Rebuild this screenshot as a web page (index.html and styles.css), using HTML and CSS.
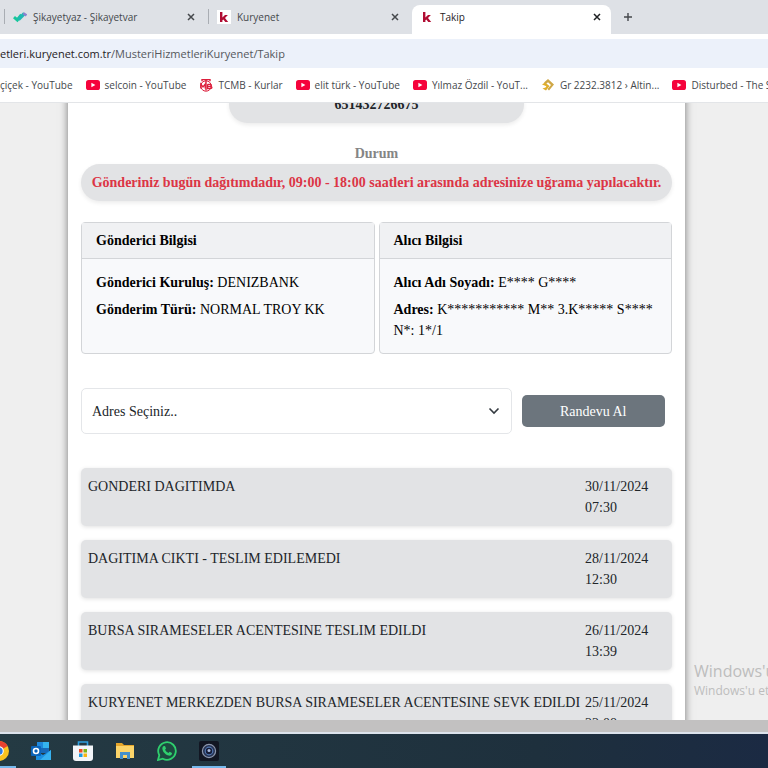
FILE: index.html
```html
<!DOCTYPE html>
<html lang="tr">
<head>
    <meta charset="UTF-8">
    <meta name="viewport" content="width=device-width, initial-scale=1.0">
    <title>Takip</title>
    <link rel="stylesheet" href="styles.css">
</head>
<body>
    <svg width="0" height="0" class="defs" aria-hidden="true">
        <symbol id="youtube" viewBox="0 0 14 10">
            <rect width="14" height="10" rx="2.6" fill="#f5033b"/>
            <path d="M5.4 2.7 9.4 5 5.4 7.3Z" fill="#fff"/>
        </symbol>
        <symbol id="close" viewBox="0 0 8 8">
            <path d="M1 1 7 7M7 1 1 7" stroke="currentColor" stroke-width="1.5"/>
        </symbol>
        <symbol id="kuryenet" viewBox="0 0 14 14">
            <path d="M3 2H5.4V7.6L8 5H10.9L8 8 11.2 12H8.3L6.3 9.4 5.4 10.3V12H3Z" fill="#b00d33"/>
        </symbol>
    </svg>

    <nav class="tabs">
        <div class="tab">
            <svg class="favicon" viewBox="0 0 14 14">
                <path d="M1 7.2 4.3 10 8.4 4.8" fill="none" stroke="#16c79c" stroke-width="3"/>
                <path d="M5.5 9.6 11.4 3.5" fill="none" stroke="#20b8b4" stroke-width="3.4"/>
                <path d="M10.3 3.2 13.5 5.4" stroke="#8b80cf" stroke-width="2.4"/>
            </svg>
            <a href="#">Şikayetyaz - Şikayetvar</a>
            <button class="close" aria-label="Kapat"><svg><use href="#close"/></svg></button>
        </div>
        <div class="tab">
            <svg class="favicon boxed"><use href="#kuryenet"/></svg>
            <a href="#">Kuryenet</a>
            <button class="close" aria-label="Kapat"><svg><use href="#close"/></svg></button>
        </div>
        <div class="tab active">
            <svg class="favicon"><use href="#kuryenet"/></svg>
            <a href="#">Takip</a>
            <button class="close" aria-label="Kapat"><svg><use href="#close"/></svg></button>
        </div>
        <button class="new-tab" aria-label="Yeni sekme">
            <svg viewBox="0 0 10 10"><path d="M5 1V9M1 5H9" stroke="currentColor" stroke-width="1.4"/></svg>
        </button>
    </nav>

    <div class="toolbar">
        <a class="address" href="#"><span class="host">etleri.kuryenet.com.tr</span>/MusteriHizmetleriKuryenet/Takip</a>
    </div>

    <nav class="bookmarks">
        <a href="#">çiçek - YouTube</a>
        <a href="#"><svg><use href="#youtube"/></svg>selcoin - YouTube</a>
        <a href="#">
            <svg viewBox="0 0 14 14" fill="none" stroke="#dc1f3c">
                <path d="M3 3.2V1.6H11V3.2M7 1.6V12.5" stroke-width="1.4"/>
                <circle cx="7" cy="8" r="5.2" stroke-width="1"/>
                <path d="M1.8 10.6V6.2L4 9 6.2 6.2V10.6M8.6 6.3V10.5H11.3C13.5 10.5 13.5 8.4 11.3 8.4H8.6M8.6 6.3H11C12.8 6.3 12.8 8.4 11 8.4" stroke-width="1.3"/>
            </svg>
            TCMB - Kurlar
        </a>
        <a href="#"><svg><use href="#youtube"/></svg>elit türk - YouTube</a>
        <a href="#"><svg><use href="#youtube"/></svg>Yılmaz Özdil - YouT...</a>
        <a href="#">
            <svg viewBox="0 0 14 14">
                <path d="M3 4.5 7 1 13 6.5 8 12.5 6.5 11 10 7 7 4.2 5 6Z" fill="#cfa746"/>
                <path d="M1 6.5 4 4.6 8.5 8 5 12.5 1.5 10.5 4.5 9.6 5.4 8.2 3.6 7.4Z" fill="#dfae2c"/>
            </svg>
            Gr 2232.3812 › Altin...
        </a>
        <a href="#"><svg><use href="#youtube"/></svg>Disturbed - The Sound</a>
    </nav>

    <main class="viewport">
        <div class="sheet">
            <div class="pill tracking">651432726675</div>

            <h2 class="status-title">Durum</h2>
            <div class="pill status">Gönderiniz bugün dağıtımdadır, 09:00 - 18:00 saatleri arasında adresinize uğrama yapılacaktır.</div>

            <div class="cards">
                <section class="card">
                    <h3>Gönderici Bilgisi</h3>
                    <div class="card-body">
                        <p><b>Gönderici Kuruluş:</b> DENIZBANK</p>
                        <p><b>Gönderim Türü:</b> NORMAL TROY KK</p>
                    </div>
                </section>
                <section class="card">
                    <h3>Alıcı Bilgisi</h3>
                    <div class="card-body">
                        <p><b>Alıcı Adı Soyadı:</b> E**** G****</p>
                        <p><b>Adres:</b> K*********** M** 3.K***** S**** N*: 1*/1</p>
                    </div>
                </section>
            </div>

            <form class="appointment">
                <div class="select-wrap">
                    <select aria-label="Adres">
                        <option>Adres Seçiniz..</option>
                    </select>
                    <svg viewBox="0 0 12 8"><path d="M1.5 1.5 6 6 10.5 1.5" fill="none" stroke="#343a40" stroke-width="1.6"/></svg>
                </div>
                <button type="button">Randevu Al</button>
            </form>

            <ul class="history">
                <li><span>GONDERI DAGITIMDA</span><time>30/11/2024 07:30</time></li>
                <li><span>DAGITIMA CIKTI - TESLIM EDILEMEDI</span><time>28/11/2024 12:30</time></li>
                <li><span>BURSA SIRAMESELER ACENTESINE TESLIM EDILDI</span><time>26/11/2024 13:39</time></li>
                <li><span>KURYENET MERKEZDEN BURSA SIRAMESELER ACENTESINE SEVK EDILDI</span><time>25/11/2024 22:08</time></li>
            </ul>
        </div>

        <div class="watermark">
            <strong>Windows'u Etkinleştir</strong>
            <span>Windows'u etkinleştirmek için Ayarlar'a gidin.</span>
        </div>
    </main>

    <div class="window-edge"></div>

    <footer class="taskbar">
        <button class="running chrome" aria-label="Chrome">
            <svg viewBox="0 0 20 20">
                <circle cx="10" cy="10" r="10" fill="#f9c31f"/>
                <path d="M10 10 1.4 5A10 10 0 0 1 18.7 5Z" fill="#e8412f"/>
                <path d="M10 10 1.4 5A10 10 0 0 0 9 20Z" fill="#2ba24c"/>
                <circle cx="10" cy="10" r="4.8" fill="#fff"/>
                <circle cx="10" cy="10" r="3.7" fill="#2f7de1"/>
            </svg>
        </button>
        <button aria-label="Outlook">
            <svg viewBox="0 0 20 20">
                <path d="M6 1H18V12H6Z" fill="#1769b8"/>
                <path d="M6 1H12V7H6Z" fill="#1e88dc"/>
                <path d="M12 1H18V7H12Z" fill="#35b4ee"/>
                <path d="M5 10 12 14 20 9V19H5Z" fill="#1a8fe0"/>
                <path d="M20 9V19H9Z" fill="#37b2f0"/>
                <rect y="5" width="10" height="10" rx="1" fill="#0b64b8"/>
                <circle cx="5" cy="10" r="2.5" fill="none" stroke="#fff" stroke-width="1.6"/>
            </svg>
        </button>
        <button aria-label="Microsoft Store">
            <svg viewBox="0 0 20 20">
                <path d="M5.5 5V1H14.5V5" fill="none" stroke="#2e9fe0" stroke-width="1.6"/>
                <path d="M0 4.5H20V17Q20 20 17 20H3Q0 20 0 17Z" fill="#f2f5f9"/>
                <path d="M6 8H9.5V11.5H6Z" fill="#ee4b25"/>
                <path d="M10.5 8H14V11.5H10.5Z" fill="#7cb518"/>
                <path d="M6 12.5H9.5V16H6Z" fill="#1b9ae4"/>
                <path d="M10.5 12.5H14V16H10.5Z" fill="#f8b514"/>
            </svg>
        </button>
        <button aria-label="Dosya Gezgini">
            <svg viewBox="0 0 20 20">
                <path d="M1 2H7L9 4H19V17H1Z" fill="#e6a62b"/>
                <path d="M1 5H19V17H1Z" fill="#fbd469"/>
                <path d="M5 18V11H15V18H12V14H8V18Z" fill="#4390cc"/>
            </svg>
        </button>
        <button aria-label="WhatsApp">
            <svg viewBox="0 0 20 20">
                <path d="M1 19 2.3 14.2A8.8 8.8 0 1 1 5.8 17.7Z" fill="#1d4a40" stroke="#2fd06e" stroke-width="1.8"/>
                <path d="M6.3 5.2 8 5 9 7.5 8.1 8.8C8.8 10.3 9.9 11.3 11.4 11.9L12.6 10.8 15 12C15 14 13.3 15 11.8 14.6 8.5 13.8 5.8 11 5.4 8 5.3 6.8 5.6 5.8 6.3 5.2Z" fill="#2fd06e"/>
            </svg>
        </button>
        <button class="running" aria-label="Kamera">
            <svg viewBox="0 0 20 20">
                <rect width="20" height="20" rx="2" fill="#121622"/>
                <circle cx="10" cy="10" r="6.6" fill="#263251" stroke="#8c96ad" stroke-width="1.2"/>
                <circle cx="10" cy="10" r="3.8" fill="#161c36" stroke="#5276b0" stroke-width="1.2"/>
                <circle cx="10" cy="9.5" r="1.5" fill="#a9b9dc"/>
            </svg>
        </button>
    </footer>
</body>
</html>
```

FILE: styles.css
```css
* {
    box-sizing: border-box;
}
body {
    margin: 0;
    height: 100vh;
    display: flex;
    flex-direction: column;
    overflow: hidden;
    background: #fff;
    font-family: "Open Sans", "Noto Sans", sans-serif;
    font-size: 10px;
    color: #45484c;
}
a {
    color: inherit;
    text-decoration: none;
    white-space: nowrap;
}
button {
    border: 0;
    padding: 0;
    background: none;
    color: inherit;
    font: inherit;
}
svg {
    display: block;
    flex: none;
}
.defs {
    position: absolute;
}

/* browser tabs */
.tabs {
    display: flex;
    flex: none;
    height: 34px;
    padding: 5px 0 0 4px;
    background: #dee1e6;
}
.tab {
    display: flex;
    align-items: center;
    flex: 0 0 204px;
    gap: 6px;
    padding: 0 13px 5px 9px;
    background: linear-gradient(#a9adb3, #a9adb3) 0 4px / 1px 15px no-repeat;
}
.tab a {
    flex: 1;
}
.tab.active {
    flex-basis: 199px;
    padding-right: 10px;
    padding-left: 8px;
    border-radius: 8px 8px 0 0;
    background: #fff;
    color: #1f2124;
}
.favicon {
    width: 14px;
    height: 14px;
}
.boxed {
    background: #fff;
}
.close svg {
    width: 8px;
    height: 8px;
}
.new-tab {
    padding: 0 12px 5px;
}
.new-tab svg {
    width: 10px;
    height: 10px;
}

/* address bar */
.toolbar {
    flex: none;
    padding: 5px 0 0;
}
.address {
    display: block;
    background: #ecf1fa;
    font-size: 11px;
    line-height: 29px;
    color: #54575c;
}
.host {
    color: #1f2124;
}

.bookmarks {
    display: flex;
    align-items: center;
    flex: none;
    gap: 13px;
    height: 35px;
    overflow: hidden;
    border-bottom: 1px solid #e3e5e8;
}
.bookmarks a {
    display: flex;
    align-items: center;
    gap: 5px;
}
.bookmarks svg {
    width: 14px;
    height: 14px;
}

/* page */
.viewport {
    position: relative;
    flex: 1;
    min-height: 0;
    overflow: hidden;
    background: #efefef;
    font-family: "Liberation Serif", "Times New Roman", serif;
    font-size: 14px;
    line-height: 21px;
    color: #212529;
}
.sheet {
    margin: -17px 83px 0 68px;
    padding: 0 13px;
    background: #fff;
    box-shadow: 0 0 8px rgba(0, 0, 0, 0.5);
}
.pill {
    padding: 8px;
    border-radius: 19px;
    background: #e2e3e5;
    box-shadow: 0 2px 4px rgba(0, 0, 0, 0.08);
    font-weight: bold;
    text-align: center;
}
.tracking {
    width: 50%;
    margin: 0 auto;
}
.status-title {
    margin: 20px 0 0;
    font-size: 14px;
    color: #858585;
    text-align: center;
}
.status {
    color: #dc3545;
}
.cards {
    display: grid;
    grid-template-columns: 1fr 1fr;
    gap: 4px;
    margin-top: 21px;
    color: #000;
}
.card {
    border: 1px solid #d3d5d8;
    border-radius: 4px;
    background: #f8f9fb;
}
.card h3 {
    margin: 0;
    padding: 7px 14px;
    border-bottom: 1px solid #d3d5d8;
    background: #f0f1f3;
    font-size: 14px;
}
.card-body {
    padding: 13px 14px 12px;
}
.card p {
    margin: 0;
}
.card p + p {
    margin-top: 6px;
}
.appointment {
    display: grid;
    grid-template-columns: 3fr 1fr;
    align-items: center;
    gap: 10px;
    margin: 34px 0;
    padding-right: 7px;
}
.select-wrap {
    position: relative;
}
.select-wrap svg {
    position: absolute;
    top: 19px;
    right: 12px;
    width: 12px;
    height: 8px;
    pointer-events: none;
}
select {
    appearance: none;
    display: block;
    width: 100%;
    height: 46px;
    padding: 0 10px;
    border: 1px solid #e4e6e9;
    border-radius: 5px;
    background: #fff;
    color: #212529;
    font: inherit;
}
.appointment button {
    height: 32px;
    border-radius: 5px;
    background: #6c757d;
    color: #fff;
}
.history {
    display: grid;
    gap: 14px;
    margin: 0;
    padding: 0;
    list-style: none;
}
.history li {
    display: flex;
    justify-content: space-between;
    padding: 8px 7px;
    border-radius: 5px;
    background: #e2e3e5;
    box-shadow: 0 1px 4px rgba(0, 0, 0, 0.12);
}
.history span {
    white-space: nowrap;
}
.history time {
    flex: 0 0 80px;
}

.watermark {
    position: absolute;
    top: 557px;
    left: calc(100% - 74px);
    white-space: nowrap;
    font-family: "Open Sans", "Noto Sans", sans-serif;
    font-size: 12px;
    line-height: 18px;
    color: #bdbdbd;
}
.watermark strong {
    display: block;
    font-size: 16px;
    font-weight: normal;
    line-height: 22px;
}

.window-edge {
    flex: none;
    height: 14px;
    border-bottom: 2px solid #dce3ec;
    background: #c2c1c1;
}

/* taskbar */
.taskbar {
    display: flex;
    flex: none;
    gap: 8px;
    height: 34px;
    background: linear-gradient(90deg, #243a43, #1e303d 70%, #1b2a43);
}
.taskbar button {
    display: flex;
    justify-content: center;
    width: 34px;
    padding-top: 7px;
}
.taskbar .chrome {
    margin-left: -18px;
}
.taskbar .running {
    border-bottom: 2px solid #76b9ed;
}
.taskbar svg {
    width: 20px;
    height: 20px;
}
```
